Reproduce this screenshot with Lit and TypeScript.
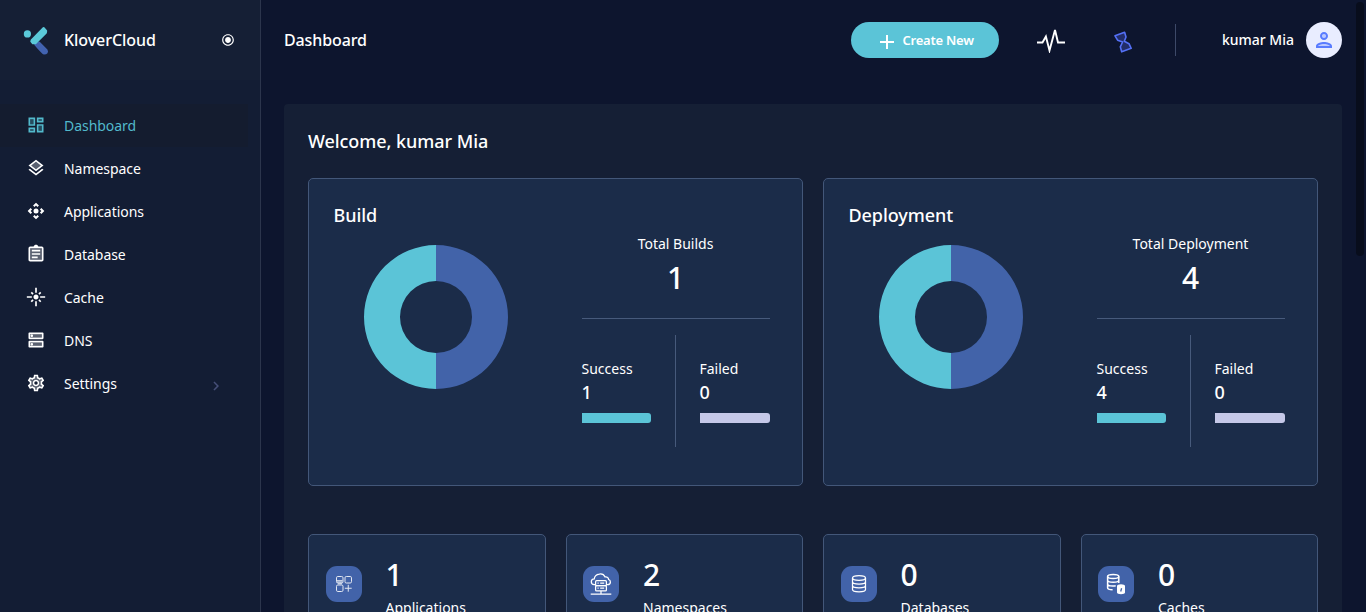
import { LitElement, html, svg, css } from "lit";
import { customElement, property } from "lit/decorators.js";

const ICONS: Record<string, unknown> = {
  dashboard: svg`<path opacity=".3" d="M5 5h4v6H5zm10 8h4v6h-4zM5 17h4v2H5zM15 5h4v2h-4z"/><path d="M3 13h8V3H3v10zm2-8h4v6H5V5zm8 16h8V11h-8v10zm2-8h4v6h-4v-6zM13 3v6h8V3h-8zm6 4h-4V5h4v2zM3 21h8v-6H3v6zm2-4h4v2H5v-2z"/>`,
  layers: svg`<path opacity=".3" d="M6.26 9L12 13.47 17.74 9 12 4.53z"/><path d="M19.37 12.8l-7.38 5.74-7.37-5.73L3 14.07l9 7 9-7zM12 2L3 9l1.63 1.27L12 16l7.36-5.73L21 9l-9-7zm0 11.47L6.26 9 12 4.53 17.74 9 12 13.47z"/>`,
  apps: svg`<path d="M15.54 5.54L13.77 7.3 12 5.54 10.23 7.3 8.46 5.54 12 2zm2.92 10l-1.76-1.77L18.46 12l-1.76-1.77 1.76-1.77L22 12zm-10 2.92l1.77-1.76L12 18.46l1.77-1.76 1.77 1.76L12 22zm-2.92-10l1.76 1.77L5.54 12l1.76 1.77-1.76 1.77L2 12z"/><circle cx="12" cy="12" r="3"/>`,
  clipboard: svg`<path opacity=".3" d="M5 5h14v14H5z"/><path d="M7 15h7v2H7zm0-4h10v2H7zm0-4h10v2H7zM19 3h-4.18C14.4 1.84 13.3 1 12 1s-2.4.84-2.82 2H5a2 2 0 0 0-2 2v14c0 1.1.9 2 2 2h14c1.100 0 2-.9 2-2V5c0-1.100-.9-2-2-2zm0 16H5V5h14v14z"/>`,
  flare: svg`<path d="M7 11H1v2h6v-2zm2.170-3.240L7.050 5.640 5.640 7.050l2.120 2.120 1.410-1.410zM13 1h-2v6h2V1zm5.360 6.050l-1.410-1.410-2.120 2.120 1.410 1.410 2.120-2.120zM17 11v2h6v-2h-6zm-5-2c-1.660 0-3 1.340-3 3s1.340 3 3 3 3-1.340 3-3-1.340-3-3-3zm2.830 7.240l2.120 2.120 1.410-1.410-2.120-2.120-1.410 1.410zm-9.190.71l1.410 1.410 2.120-2.120-1.410-1.410-2.120 2.120zM11 23h2v-6h-2v6z"/>`,
  dns: svg`<path opacity=".3" d="M5 5h14v4H5zm0 10h14v4H5z"/><path d="M20 13H4c-.55 0-1 .45-1 1v6c0 .55.45 1 1 1h16c.55 0 1-.45 1-1v-6c0-.55-.45-1-1-1zm-1 6H5v-4h14v4zm-12-.5a1.500 1.500 0 1 0 0-3 1.500 1.500 0 0 0 0 3zM20 3H4c-.55 0-1 .45-1 1v6c0 .55.45 1 1 1h16c.55 0 1-.45 1-1V4c0-.55-.45-1-1-1zm-1 6H5V5h14v4zM7 8.500a1.500 1.500 0 1 0 0-3 1.500 1.500 0 0 0 0 3z"/>`,
  settings: svg`<path opacity=".3" d="M19.280 8.600l-.7-1.210-1.270.51-1.060.43-.91-.7c-.39-.3-.8-.54-1.230-.71l-1.060-.43-.16-1.130L12.700 4h-1.400l-.19 1.350-.16 1.130-1.060.44c-.41.17-.82.41-1.250.73l-.9.68-1.050-.42-1.270-.52-.7 1.210 1.080.84.89.7-.14 1.130c-.03.3-.05.53-.05.73s.02.43.05.73l.14 1.130-.89.7-1.080.84.7 1.210 1.270-.51 1.060-.43.91.7c.39.3.8.54 1.230.71l1.060.43.16 1.130.19 1.360h1.390l.19-1.350.16-1.130 1.060-.43c.41-.17.82-.41 1.250-.73l.9-.68 1.040.42 1.270.51.7-1.210-1.080-.84-.89-.7.14-1.130c.04-.31.05-.52.05-.73 0-.21-.02-.43-.05-.73l-.14-1.130.89-.7zM12 16c-2.210 0-4-1.790-4-4s1.790-4 4-4 4 1.790 4 4-1.790 4-4 4z"/><path d="M19.430 12.980c.04-.32.07-.64.07-.98 0-.34-.03-.66-.07-.98l2.110-1.650c.19-.15.24-.42.12-.64l-2-3.460c-.12-.22-.39-.3-.61-.22l-2.490 1c-.52-.4-1.080-.73-1.690-.98l-.38-2.650A.488.488 0 0 0 14 2h-4c-.25 0-.46.18-.49.42l-.38 2.650c-.61.25-1.170.59-1.690.98l-2.490-1c-.23-.09-.49 0-.61.22l-2 3.460c-.13.22-.07.49.12.64l2.110 1.650c-.04.32-.07.65-.07.98 0 .33.03.66.07.98l-2.110 1.650c-.19.15-.24.42-.12.64l2 3.460c.12.22.39.3.61.22l2.490-1c.52.4 1.080.73 1.690.98l.38 2.650c.03.24.24.42.49.42h4c.25 0 .46-.18.49-.42l.38-2.650c.61-.25 1.170-.59 1.690-.98l2.490 1c.23.09.49 0 .61-.22l2-3.460c.12-.22.07-.49-.12-.64l-2.110-1.650zm-1.980-1.710c.04.31.05.52.05.73 0 .21-.02.43-.05.73l-.14 1.130.89.7 1.080.84-.7 1.210-1.270-.51-1.040-.42-.9.68c-.43.32-.84.56-1.250.73l-1.060.43-.16 1.130-.2 1.350h-1.400l-.19-1.350-.16-1.130-1.060-.43c-.43-.18-.83-.41-1.230-.71l-.91-.7-1.060.43-1.270.51-.7-1.210 1.080-.84.89-.7-.14-1.130c-.03-.31-.05-.54-.05-.74s.02-.43.05-.73l.14-1.130-.89-.7-1.080-.84.7-1.210 1.270.51 1.040.42.9-.68c.43-.32.84-.56 1.250-.73l1.060-.43.16-1.130.2-1.350h1.390l.19 1.350.16 1.130 1.060.43c.43.18.83.41 1.230.71l.91.7 1.060-.43 1.270-.51.7 1.210-1.070.85-.89.7.14 1.130z"/><path d="M12 8c-2.210 0-4 1.790-4 4s1.790 4 4 4 4-1.790 4-4-1.790-4-4-4zm0 6c-1.100 0-2-.9-2-2s.9-2 2-2 2 .9 2 2-.9 2-2 2z"/>`,
  radio: svg`<path d="M12 7c-2.760 0-5 2.240-5 5s2.240 5 5 5 5-2.240 5-5-2.240-5-5-5zm0-5C6.480 2 2 6.480 2 12s4.480 10 10 10 10-4.480 10-10S17.520 2 12 2zm0 18c-4.420 0-8-3.580-8-8s3.580-8 8-8 8 3.580 8 8-3.580 8-8 8z"/>`,
  chevron: svg`<path d="M10 6L8.590 7.410 13.170 12l-4.580 4.590L10 18l6-6z"/>`,
  person: svg`<path opacity=".3" d="M12 16c-2.690 0-5.770 1.280-6 2h12c-.2-.71-3.300-2-6-2z"/><circle opacity=".3" cx="12" cy="8" r="2"/><path d="M12 14c-2.670 0-8 1.340-8 4v2h16v-2c0-2.660-5.330-4-8-4zm-6 4c.22-.72 3.310-2 6-2 2.700 0 5.800 1.290 6 2H6zm6-6c2.210 0 4-1.790 4-4s-1.790-4-4-4-4 1.790-4 4 1.790 4 4 4zm0-6c1.100 0 2 .9 2 2s-.9 2-2 2-2-.9-2-2 .9-2 2-2z"/>`,
};

const STAT_ICONS: Record<string, unknown> = {
  apps: svg`<g stroke-width="1" opacity=".85"><rect x="4.500" y="4.500" width="6.500" height="6.500" rx="1.300"/><rect x="13" y="4.500" width="6.500" height="6.500" rx="1.300"/><rect x="4.500" y="13" width="6.500" height="6.500" rx="1.300"/><path d="M16.250 12.800v6.900M12.800 16.250h6.900M5 8.700h5.500M5 10h5.500M6 11.800h4"/></g>`,
  cloud: svg`<g stroke-width="1.250"><path d="M6.500 12.700H5.200C3.400 12.500 2.300 11.200 2.300 9.700c0-1.800 1.300-2.900 3-2.900C5.600 4 7.700 2.500 10.300 2.100c2.500-.5 4.800.8 5.800 2.900 2-.4 3.500.8 3.500 2.500 1.200.4 1.800 1.200 1.800 2.400 0 1.600-1.100 2.700-2.900 2.800h-1"/><rect x="6.600" y="8.700" width="10.800" height="5" rx="1"/><rect x="6.600" y="13.700" width="10.800" height="5.200" rx="1"/><path d="M8.500 11.200h1.200m1.500 0h4M8.500 16.200h1.200m1.500 0h4M12 19v3M1.700 22h20.600"/></g>`,
  database: svg`<g stroke-width="1.250"><ellipse cx="12" cy="6" rx="6.500" ry="2.300"/><path d="M5.500 6v11.500c0 1.300 2.900 2.300 6.500 2.300s6.500-1 6.500-2.300V6M5.500 9.800c0 1.300 2.900 2.300 6.500 2.300s6.500-1 6.500-2.300M5.500 13.600c0 1.300 2.900 2.300 6.500 2.300s6.500-1 6.500-2.300"/></g>`,
  cache: svg`<g stroke-width="1.500"><ellipse cx="9.200" cy="4.500" rx="5.600" ry="2"/><path d="M3.600 4.500v11.200c0 1.100 2 2 5 2.100M14.800 4.500v6.500M3.600 8.200c0 1.100 2.500 2 5.600 2s5.600-.9 5.600-2M3.600 12c0 1.100 2.300 2 5.300 2 1 0 2-.1 2.800-.3"/></g><path fill="#fff" stroke="none" d="M13 14c0-1.100 1.800-1.800 4-1.800s4 .7 4 1.800v6.500c0 1.100-1.800 1.700-4 1.700s-4-.6-4-1.700z"/><path stroke="#4263a9" stroke-width="1.300" d="M17.600 16.300l-.9 3.200"/>`,
};

const NAV = [
  ["Dashboard", "dashboard"], ["Namespace", "layers"], ["Applications", "apps"],
  ["Database", "clipboard"], ["Cache", "flare"], ["DNS", "dns"], ["Settings", "settings"],
];

const icon = (name: string, cls = "icon") =>
  html`<svg class=${cls} viewBox="0 0 24 24" fill="currentColor">${ICONS[name]}</svg>`;

@customElement("summary-card")
class SummaryCard extends LitElement {
  @property() heading = "";
  @property() label = "";
  @property() total = "";

  static styles = css`
    :host { display: flex; box-sizing: border-box; height: 308px; border: 1px solid #435779; border-radius: 5px; background: #1b2c49; color: #fff; padding: 23px 24px 24px; }
    .chart { width: 225px; padding: 0 0 0 0.5px; box-sizing: border-box; }
    h3 { margin: 0; font-size: 18px; line-height: 26px; font-weight: 500; letter-spacing: -0.06px; }
    .donut { display: block; margin: 17px 0 0 30.5px; }
    .stats { width: 188px; margin-left: 24px; padding-top: 31px; }
    .label { font-size: 14px; line-height: 22px; text-align: center; padding-right: 1px; }
    .total { font-size: 30px; line-height: 40px; font-weight: 500; text-align: center; margin-top: 3px; padding-right: 1px; }
    .split { display: grid; grid-template-columns: 93px 95px; border-top: 1px solid #475a7b; margin-top: 20px; padding-top: 16px; }
    .part { padding-top: 23px; font-size: 14px; line-height: 22px; }
    .part:first-child { padding-right: 24px; }
    .part:last-child { padding-left: 24px; border-left: 1px solid #475a7b; height: 89px; }
    .name, .count { margin-left: -0.5px; }
    .count { font-size: 18px; line-height: 24px; font-weight: 500; }
    .bar { height: 10px; margin-top: 9px; border-radius: 0 3px 3px 0; background: #5bc4d7; }
    .failed { background: #c5c8e8; }
  `;

  render() {
    return html`
      <div class="chart">
        <h3>${this.heading}</h3>
        <svg class="donut" width="144" height="144" viewBox="0 0 144 144">
          <path fill="#4263a9" d="M72 0a72 72 0 0 1 0 144v-36a36 36 0 0 0 0-72z" />
          <path fill="#5bc4d7" d="M72 0a72 72 0 0 0 0 144v-36a36 36 0 0 1 0-72z" />
        </svg>
      </div>
      <div class="stats">
        <div class="label">${this.label}</div>
        <div class="total">${this.total}</div>
        <div class="split">
          <div class="part"><div class="name">Success</div><div class="count">${this.total}</div><div class="bar"></div></div>
          <div class="part"><div class="name">Failed</div><div class="count">0</div><div class="bar failed"></div></div>
        </div>
      </div>`;
  }
}

@customElement("app-root")
class AppRoot extends LitElement {
  static styles = css`
    :host { display: flex; position: relative; height: 612px; width: 1366px; overflow: hidden; background: #0d152e; color: #fff; font-family: "Noto Sans", "Open Sans", sans-serif; }
    aside { width: 260px; flex: none; border-right: 1px solid #2c354c; background: #131d34; }
    .brand { height: 80px; display: flex; align-items: center; padding: 0 25px 0 23px; background: #151f35; font-size: 16px; font-weight: 500; letter-spacing: -0.06px; }
    .logo { width: 26px; height: 29px; margin-right: 15px; }
    .brand .name { flex: 1; }
    .radio { width: 14px; height: 14px; }
    nav { padding-top: 24px; }
    .item { display: flex; align-items: center; height: 43px; width: 248px; box-sizing: border-box; padding-left: 26px; font-size: 14px; letter-spacing: -0.04px; }
    .item.active { background: #141c2f; color: #52b9cc; }
    .icon { width: 20px; height: 20px; margin: 0 18px 2px 0; flex: none; }
    .item span { flex: 1; }
    .arrow { width: 18px; height: 18px; color: #464f78; margin: 4px 23px 0 0; }
    main { flex: 1; padding: 0 24px 0 23px; }
    header { display: flex; align-items: center; height: 80px; font-size: 16px; font-weight: 500; letter-spacing: -0.12px; }
    .page { flex: 1; }
    .create { display: flex; align-items: center; width: 148px; height: 36px; box-sizing: border-box; padding: 0 0 0 29px; border: 0; border-radius: 18px; background: #5bc4d7; color: #fff; font: 600 13px "Noto Sans", sans-serif; letter-spacing: -0.22px; }
    .plus { width: 14px; height: 14px; margin: 3px 8.5px 0 0; }
    .pulse { width: 28px; height: 26px; margin-left: 38px; }
    .glass { width: 22px; height: 26px; margin: 3px 0 0 47px; }
    .rule { width: 1px; height: 32px; background: #3d4968; margin-left: 41px; }
    .user { font-size: 14px; line-height: 20px; margin-left: 46px; letter-spacing: 0; }
    .avatar { width: 36px; height: 36px; border-radius: 50%; background: #e9edff; color: #597cff; display: grid; place-items: center; margin-left: 12px; }
    .person { width: 24px; height: 24px; }
    .panel { margin-top: 24px; height: 700px; border-radius: 4px; background: #151f35; padding: 24px; box-sizing: border-box; }
    h2 { margin: 0; font-size: 18px; line-height: 26px; font-weight: 500; letter-spacing: -0.06px; }
    .cards { display: grid; grid-template-columns: 1fr 1fr; gap: 20px; margin-top: 24px; }
    .tiles { display: grid; grid-template-columns: repeat(4, 1fr); gap: 20px; margin-top: 48px; }
    .tile { display: flex; height: 120px; box-sizing: border-box; border: 1px solid #435779; border-radius: 5px; background: #1b2c49; padding: 20px 16.5px; }
    .badge { width: 36px; height: 36px; border-radius: 11px; background: #4263a9; display: grid; place-items: center; margin: 11px 24px 0 0; }
    .badge svg { width: 24px; height: 24px; }
    .num { font-size: 30px; line-height: 40px; font-weight: 500; }
    .cap { font-size: 14px; line-height: 22px; margin-top: 2px; }
    .thumb { position: absolute; right: 2px; top: 2px; width: 8px; height: 254px; border-radius: 4px; background: #080d1c; }
  `;

  render() {
    const tiles = [["1", "Applications", "apps"], ["2", "Namespaces", "cloud"], ["0", "Databases", "database"], ["0", "Caches", "cache"]];
    return html`
      <aside>
        <div class="brand">
          <svg class="logo" viewBox="0 0 26 29" stroke-linejoin="round" stroke-width="2">
            <path d="M12.300 18.500L16 16.500L23.700 24.300Q25 27.300 21 27.500Q19.800 27.300 12.300 18.500z" fill="#4263b0" stroke="#4263b0" />
            <path d="M20.600 2L23.200 4.900L22.900 6.900L12.400 17.300H9.900L8.300 15.400L8.600 14.300z" fill="#5bc9d9" stroke="#5bc9d9" />
            <circle cx="4.400" cy="7.900" r="3.600" fill="#5bc9d9" />
          </svg>
          <span class="name">KloverCloud</span>
          ${icon("radio", "radio")}
        </div>
        <nav>
          ${NAV.map(([label, glyph], i) => html`<div class="item ${i === 0 ? "active" : ""}">${icon(glyph)}<span>${label}</span>${label === "Settings" ? icon("chevron", "arrow") : ""}</div>`)}
        </nav>
      </aside>
      <main>
        <header>
          <span class="page">Dashboard</span>
          <button class="create"><svg class="plus" viewBox="0 0 14 14" stroke="#fff" stroke-width="2"><path d="M7 0v14M0 7h14" /></svg>Create New</button>
          <svg class="pulse" viewBox="0 0 28 26" fill="none" stroke="#fff" stroke-width="1.900"><path d="M0 15.500h5.500L8.900 9.500l3.600 14L18 3l3 12.500h7" /></svg>
          <svg class="glass" viewBox="0 0 22 26" fill="#222d68" stroke="#5470f5" stroke-width="1.600" stroke-linejoin="round"><path d="M3 6.800L12.600 3.300L14 8L12.300 12.300L17 14.700L19.200 19.300L9.700 22.800L8.300 17.800L10.600 13L5.600 11.200z" /></svg>
          <span class="rule"></span>
          <span class="user">kumar Mia</span>
          <span class="avatar">${icon("person", "person")}</span>
        </header>
        <section class="panel">
          <h2>Welcome, kumar Mia</h2>
          <div class="cards">
            <summary-card heading="Build" label="Total Builds" total="1"></summary-card>
            <summary-card heading="Deployment" label="Total Deployment" total="4"></summary-card>
          </div>
          <div class="tiles">
            ${tiles.map(([n, label, glyph]) => html`<div class="tile">
              <div class="badge"><svg viewBox="0 0 24 24" fill="none" stroke="#fff">${STAT_ICONS[glyph]}</svg></div>
              <div><div class="num">${n}</div><div class="cap">${label}</div></div>
            </div>`)}
          </div>
        </section>
      </main>
      <div class="thumb"></div>`;
  }
}
